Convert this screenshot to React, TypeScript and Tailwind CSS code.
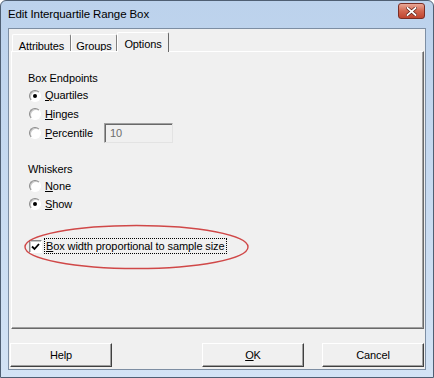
import React from 'react';

const font = { fontFamily: '"Liberation Sans", Arial, sans-serif' };

const Radio = ({ checked }: { checked?: boolean }) => (
  <span className="relative inline-block w-[12px] h-[12px] rounded-full border border-t-[#8a8a8a] border-l-[#8a8a8a] border-b-white border-r-white bg-white shadow-[inset_1px_1px_0_#c8c8c8]">
    {checked && <span className="absolute left-[3px] top-[3px] w-[4px] h-[4px] rounded-full bg-black" />}
  </span>
);

const RadioRow = ({ label, checked, h = 'h-[18px]', children }: { label: React.ReactNode; checked?: boolean; h?: string; children?: React.ReactNode }) => (
  <div className={`flex items-center ${h}`}>
    <div className="w-[17px] pl-[1px] flex items-center">
      <Radio checked={checked} />
    </div>
    <span>{label}</span>
    {children}
  </div>
);

const Tab = ({ label, w, active }: { label: string; w: string; active?: boolean }) =>
  active ? (
    <div className={`${w} h-[20px] -mb-px relative z-10 bg-[#f0f0f0] border-t border-l border-white border-r border-r-[#696969] rounded-t-[2px] flex items-start justify-center pt-[3px]`}>
      {label}
    </div>
  ) : (
    <div className={`${w} h-[17px] border-t border-l border-white border-r border-r-[#808080] rounded-t-[2px] flex items-start justify-center pt-[3px]`}>
      {label}
    </div>
  );

const Button = ({ children }: { children: React.ReactNode }) => (
  <div className="w-[102px] h-[24px] bg-[#f0f0f0] border border-t-white border-l-white border-b-[#404040] border-r-[#404040] shadow-[inset_-1px_-1px_0_#a0a0a0] flex items-center justify-center">
    {children}
  </div>
);

function App() {
  return (
    <div
      className="relative w-[434px] h-[378px] flex flex-col border border-[#4f5f73] rounded-t-[6px] bg-gradient-to-b from-[#bcd2ec] to-[#d3e3f5] text-[11px] tracking-[-0.1px] text-black"
      style={font}
    >
      {/* title bar */}
      <div className="h-[27px] flex justify-between pl-[7px] pr-[8px] shrink-0">
        <span className="text-[11.5px] leading-[26px] text-black">Edit Interquartile Range Box</span>
        <div className="mt-[2px] w-[27px] h-[16px] rounded-[3px] border border-[#7a2e25] bg-gradient-to-b from-[#e9a898] via-[#d2664f] to-[#c0442f] flex items-center justify-center">
          <svg width="11" height="9" viewBox="0 0 11 9">
            <path d="M1.5 1 L9.5 8 M9.5 1 L1.5 8" stroke="#5a1c14" strokeWidth="3.2" strokeLinecap="square" />
            <path d="M1.5 1 L9.5 8 M9.5 1 L1.5 8" stroke="#ffffff" strokeWidth="1.8" strokeLinecap="square" />
          </svg>
        </div>
      </div>

      {/* client area */}
      <div className="mx-[7px] mb-[7px] flex-1 border border-[#7d8ea3] bg-[#f0f0f0] flex flex-col">
        {/* tabs */}
        <div className="h-[22px] flex items-end pl-[3px]">
          <Tab label="Attributes" w="w-[59px]" />
          <Tab label="Groups" w="w-[46px]" />
          <Tab label="Options" w="w-[52px]" active />
        </div>

        {/* panel */}
        <div className="ml-[2px] mr-[1px] h-[278px] border border-t-white border-l-white border-b-[#696969] border-r-[#696969] shadow-[inset_-1px_-1px_0_#a0a0a0] pl-[16px] pt-[19px] flex flex-col">
          <div className="h-[14px] leading-[14px]">Box Endpoints</div>
          <RadioRow checked h="h-[19px] mt-[1px]" label={<><u>Q</u>uartiles</>} />
          <RadioRow h="h-[18px]" label={<><u>H</u>inges</>} />
          <RadioRow h="h-[20px]" label={<><u>P</u>ercentile</>}>
            <div className="ml-[11px] w-[69px] h-[20px] border border-t-[#a0a0a0] border-l-[#a0a0a0] border-b-[#e3e3e3] border-r-[#e3e3e3] shadow-[inset_1px_1px_0_#696969] bg-[#f0f0f0] flex items-center pl-[5px] text-[#6d6d6d]">
              10
            </div>
          </RadioRow>

          <div className="h-[14px] leading-[14px] mt-[19px]">Whiskers</div>
          <RadioRow h="h-[18px] mt-[1px]" label={<><u>N</u>one</>} />
          <RadioRow checked h="h-[18px]" label={<><u>S</u>how</>} />

          <div className="flex items-center h-[18px] mt-[24px]">
            <div className="w-[16px] pl-[1px] flex items-center">
              <span className="w-[13px] h-[13px] border border-t-[#8a8a8a] border-l-[#8a8a8a] border-b-white border-r-white bg-white shadow-[inset_1px_1px_0_#c8c8c8] flex items-center justify-center">
                <svg width="9" height="9" viewBox="0 0 9 9">
                  <path d="M1 4.5 L3.5 7 L8 2" stroke="#000" strokeWidth="1.8" fill="none" />
                </svg>
              </span>
            </div>
            <span className="border border-dotted border-black px-[1px] leading-[14px]">
              <u>B</u>ox width proportional to sample size
            </span>
          </div>
        </div>

        {/* buttons */}
        <div className="mt-[14px] flex justify-between pl-[1px] pr-[1px]">
          <Button>Help</Button>
          <div className="flex gap-[18px]">
            <Button><span><u>O</u>K</span></Button>
            <Button>Cancel</Button>
          </div>
        </div>
      </div>

      {/* annotation ellipse drawn over the dialog */}
      <svg className="absolute left-[21px] top-[221px] pointer-events-none" width="230" height="52" viewBox="0 0 230 52">
        <ellipse cx="114.5" cy="25" rx="111.5" ry="21.5" fill="none" stroke="#d04848" strokeWidth="1.4" />
      </svg>
    </div>
  );
}

export default App;
